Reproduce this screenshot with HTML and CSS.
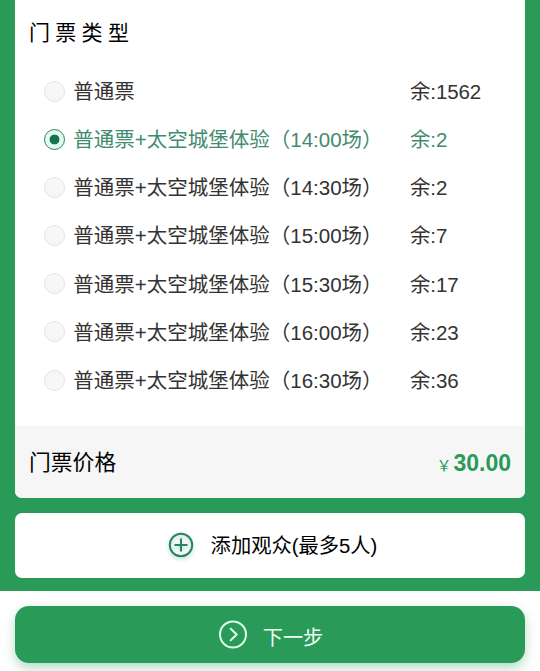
FILE: index.html
```html
<!DOCTYPE html>
<html lang="zh-CN">
<head>
    <meta charset="UTF-8">
    <meta name="viewport" content="width=device-width, initial-scale=1.0">
    <title>门票预约</title>
    <link rel="stylesheet" href="styles.css">
</head>
<body>
    <div class="page">
        <div class="card">
            <h2>门票类型</h2>

            <!-- Ticket types -->
            <div class="ticket-list">
                <label class="ticket">
                    <input type="radio" name="ticket">
                    <span class="name">普通票</span>
                    <span class="left">余:1562</span>
                </label>
                <label class="ticket">
                    <input type="radio" name="ticket" checked>
                    <span class="name">普通票+太空城堡体验（14:00场）</span>
                    <span class="left">余:2</span>
                </label>
                <label class="ticket">
                    <input type="radio" name="ticket">
                    <span class="name">普通票+太空城堡体验（14:30场）</span>
                    <span class="left">余:2</span>
                </label>
                <label class="ticket">
                    <input type="radio" name="ticket">
                    <span class="name">普通票+太空城堡体验（15:00场）</span>
                    <span class="left">余:7</span>
                </label>
                <label class="ticket">
                    <input type="radio" name="ticket">
                    <span class="name">普通票+太空城堡体验（15:30场）</span>
                    <span class="left">余:17</span>
                </label>
                <label class="ticket">
                    <input type="radio" name="ticket">
                    <span class="name">普通票+太空城堡体验（16:00场）</span>
                    <span class="left">余:23</span>
                </label>
                <label class="ticket">
                    <input type="radio" name="ticket">
                    <span class="name">普通票+太空城堡体验（16:30场）</span>
                    <span class="left">余:36</span>
                </label>
            </div>

            <div class="price-row">
                <span class="label">门票价格</span>
                <span class="price"><span class="yen">￥</span>30.00</span>
            </div>
        </div>

        <button class="add-btn">
            <svg class="add-icon" width="26" height="26" viewBox="0 0 26 26">
                <circle cx="13" cy="13" r="11.2"/>
                <path d="M13 7.2v11.6M7.2 13h11.6"/>
            </svg>
            <span>添加观众(最多5人)</span>
        </button>
    </div>

    <div class="footer">
        <button class="next-btn">
            <svg class="next-icon" width="30" height="30" viewBox="0 0 30 30">
                <circle cx="15" cy="14.5" r="13"/>
                <path d="M12.7 8.8l6 5.7-6 5.7"/>
            </svg>
            <span>下一步</span>
        </button>
    </div>
</body>
</html>
```

FILE: styles.css
```css
* {
    box-sizing: border-box;
}

body {
    margin: 0;
    height: 671px;
    overflow: hidden;
    background: #fff;
    color: #000;
    font-family: "Liberation Sans", "Noto Sans CJK SC", sans-serif;
}

.page {
    height: 591px;
    padding: 0 15px;
    background: #299a58;
}

.card {
    height: 498px;
    background: #fff;
    border-radius: 0 0 7px 7px;
    overflow: hidden;
}

h2 {
    margin: 0;
    padding: 17px 14px 0;
    height: 67px;
    font-size: 21px;
    font-weight: normal;
    letter-spacing: 5.3px;
    line-height: 32px;
}

/* Ticket types */
.ticket-list {
    height: 359px;
    padding-left: 29px;
}

.ticket {
    display: flex;
    align-items: center;
    height: 48.17px;
    color: #333;
    font-size: 20.5px;
    line-height: 30px;
    white-space: nowrap;
}

.ticket input {
    appearance: none;
    flex: none;
    width: 21px;
    height: 21px;
    margin: 0 8.3px 0 0;
    border: 1.5px solid #e4e4e4;
    border-radius: 50%;
    background: #f7f7f7;
}

.ticket input:checked {
    border-color: #2a8263;
    background: radial-gradient(circle, #157350 4.5px, #e3fbee 5.3px);
}

.ticket span {
    padding-top: 1.6px;
}

.ticket .name {
    width: 336.7px;
}

.ticket .left {
    letter-spacing: -0.15px;
}

.ticket:has(input:checked) {
    color: #438b70;
}

.price-row {
    display: flex;
    align-items: center;
    justify-content: space-between;
    height: 72px;
    padding: 0 14px;
    background: #f6f6f6;
    font-size: 21.8px;
}

.price-row .label {
    padding-bottom: 3px;
}

.price {
    padding-top: 2px;
    color: #299a58;
    font-size: 23px;
    font-weight: bold;
}

.yen {
    margin-right: 2px;
    font-size: 15px;
    font-weight: normal;
}

button {
    display: flex;
    align-items: center;
    justify-content: center;
    width: 100%;
    border: none;
    font-family: inherit;
}

.add-btn {
    height: 65px;
    margin-top: 15px;
    padding: 0 0 1px 5px;
    gap: 17px;
    border-radius: 7px;
    background: #fff;
    color: #000;
    font-size: 20.3px;
}

.add-btn span {
    padding-bottom: 2px;
}

svg {
    fill: none;
    stroke-linecap: round;
    stroke-linejoin: round;
}

.add-icon {
    stroke: #2b8263;
    stroke-width: 2;
    filter: drop-shadow(0 2px 2px rgba(41, 154, 110, 0.4));
}

.footer {
    padding: 15px 15px 0;
}

.next-btn {
    height: 57px;
    padding-left: 7px;
    gap: 15px;
    border-radius: 14px;
    background: #299a58;
    box-shadow: 0 5px 12px rgba(41, 154, 88, 0.35);
    color: #effff3;
    font-size: 20.2px;
}

.next-btn span {
    padding-top: 3px;
}

.next-icon {
    stroke: #dcffe6;
    stroke-width: 2;
}
```
